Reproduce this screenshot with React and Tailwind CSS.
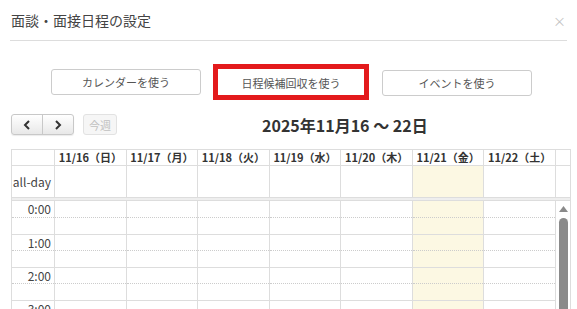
import React from 'react';

const days = [
  { label: '11/16（日）' },
  { label: '11/17（月）' },
  { label: '11/18（火）' },
  { label: '11/19（水）' },
  { label: '11/20（木）' },
  { label: '11/21（金）', today: true },
  { label: '11/22（土）' },
];

const hours = ['0:00', '1:00', '2:00', '3:00'];

const font = { fontFamily: '"Noto Sans CJK JP", "Noto Sans", sans-serif' };

function ModeButton({ children }) {
  return (
    <button className="h-[26px] w-[150px] rounded-[3px] border border-[#ccc] bg-white text-[11px] text-[#555]">
      {children}
    </button>
  );
}

export default function App() {
  return (
    <div
      className="relative h-[309px] w-[577px] overflow-hidden bg-white text-[#333]"
      style={font}
    >
      {/* Modal header */}
      <div className="mx-[10px] flex h-[41px] items-center justify-between border-b border-[#ddd] pl-[1px] pr-[1px]">
        <h1 className="text-[14px] leading-none text-[#444]">面談・面接日程の設定</h1>
        <span className="text-[13px] leading-none text-[#c4c4c4]">×</span>
      </div>

      {/* Mode switch */}
      <div className="mt-[23px] flex items-center pl-[51px]">
        <ModeButton>カレンダーを使う</ModeButton>
        <div className="ml-[12px] border-[5px] border-[#e31a1c]">
          <button className="h-[24px] w-[146px] bg-white text-[11px] text-[#555]">
            日程候補回収を使う
          </button>
        </div>
        <div className="ml-[13px]">
          <ModeButton>イベントを使う</ModeButton>
        </div>
      </div>

      {/* Toolbar */}
      <div className="mt-[14px] flex items-center pl-[11px]">
        <div className="flex h-[21px] overflow-hidden rounded-[3px] border border-[#c8c8c8] bg-gradient-to-b from-white to-[#e8e8e8] shadow-[0_1px_1px_rgba(0,0,0,0.08)]">
          <button className="flex w-[30px] items-center justify-center">
            <svg width="8" height="10" viewBox="0 0 8 10">
              <path d="M6 1 L2 5 L6 9" fill="none" stroke="#333" strokeWidth="2" />
            </svg>
          </button>
          <div className="w-px bg-[#c8c8c8]" />
          <button className="flex w-[30px] items-center justify-center">
            <svg width="8" height="10" viewBox="0 0 8 10">
              <path d="M2 1 L6 5 L2 9" fill="none" stroke="#333" strokeWidth="2" />
            </svg>
          </button>
        </div>
        <button className="ml-[9px] h-[21px] w-[34px] rounded-[3px] border border-[#e2e2e2] bg-[#f6f6f6] text-[11px] text-[#c0c0c0]">
          今週
        </button>
        <h2 className="ml-[145px] text-[16px] font-bold leading-none text-[#333]">
          2025年11月16 〜 22日
        </h2>
      </div>

      {/* Calendar */}
      <div className="ml-[11px] mt-[14px] w-[560px] border-l border-t border-[#ddd]">
        {/* Day headers */}
        <div className="grid h-[16px] grid-cols-[43px_repeat(7,1fr)_15px] border-b border-[#ddd]">
          <div className="border-r border-[#ddd]" />
          {days.map((d) => (
            <div
              key={d.label}
              className="flex items-center justify-center border-r border-[#ddd] text-[11px] font-bold leading-none text-[#333]"
            >
              {d.label}
            </div>
          ))}
          <div className="border-r border-[#ddd]" />
        </div>

        {/* All-day row */}
        <div className="grid h-[32px] grid-cols-[43px_repeat(7,1fr)_15px] border-b border-[#ddd]">
          <div className="flex items-center justify-end border-r border-[#ddd] pr-[3px] text-[12px] text-[#444]">
            all-day
          </div>
          {days.map((d) => (
            <div
              key={d.label}
              className={`border-r border-[#ddd] ${d.today ? 'bg-[#fcf8e3]' : ''}`}
            />
          ))}
          <div className="border-r border-[#ddd]" />
        </div>

        <div className="h-[3px] border-b border-r border-[#ddd] bg-[#eee]" />

        {/* Time grid */}
        <div className="flex">
          <div className="grid w-[544px] grid-cols-[43px_repeat(7,1fr)]">
            <div className="border-r border-[#ddd]">
              {hours.map((h) => (
                <div key={h} className="h-[33.3px] border-b border-[#ddd]">
                  <div className="flex h-[16.6px] items-start justify-end border-b border-dotted border-[#ccc] pr-[3px] pt-[1px] text-[12px] leading-[14px] text-[#444]">
                    {h}
                  </div>
                </div>
              ))}
            </div>
            {days.map((d) => (
              <div
                key={d.label}
                className={`border-r border-[#ddd] ${d.today ? 'bg-[#fcf8e3]' : ''}`}
              >
                {hours.map((h) => (
                  <div key={h} className="h-[33.3px] border-b border-[#ddd]">
                    <div className="h-[16.6px] border-b border-dotted border-[#ccc]" />
                  </div>
                ))}
              </div>
            ))}
          </div>

          {/* Scrollbar */}
          <div className="flex w-[15px] flex-col items-center border-r border-[#ddd] pt-[5px]">
            <svg width="9" height="6" viewBox="0 0 9 6">
              <path d="M4.5 0 L9 6 L0 6 Z" fill="#8a8a8a" />
            </svg>
            <div className="mt-[6px] h-[120px] w-[9px] rounded-full bg-[#8a8a8a]" />
          </div>
        </div>
      </div>
    </div>
  );
}
